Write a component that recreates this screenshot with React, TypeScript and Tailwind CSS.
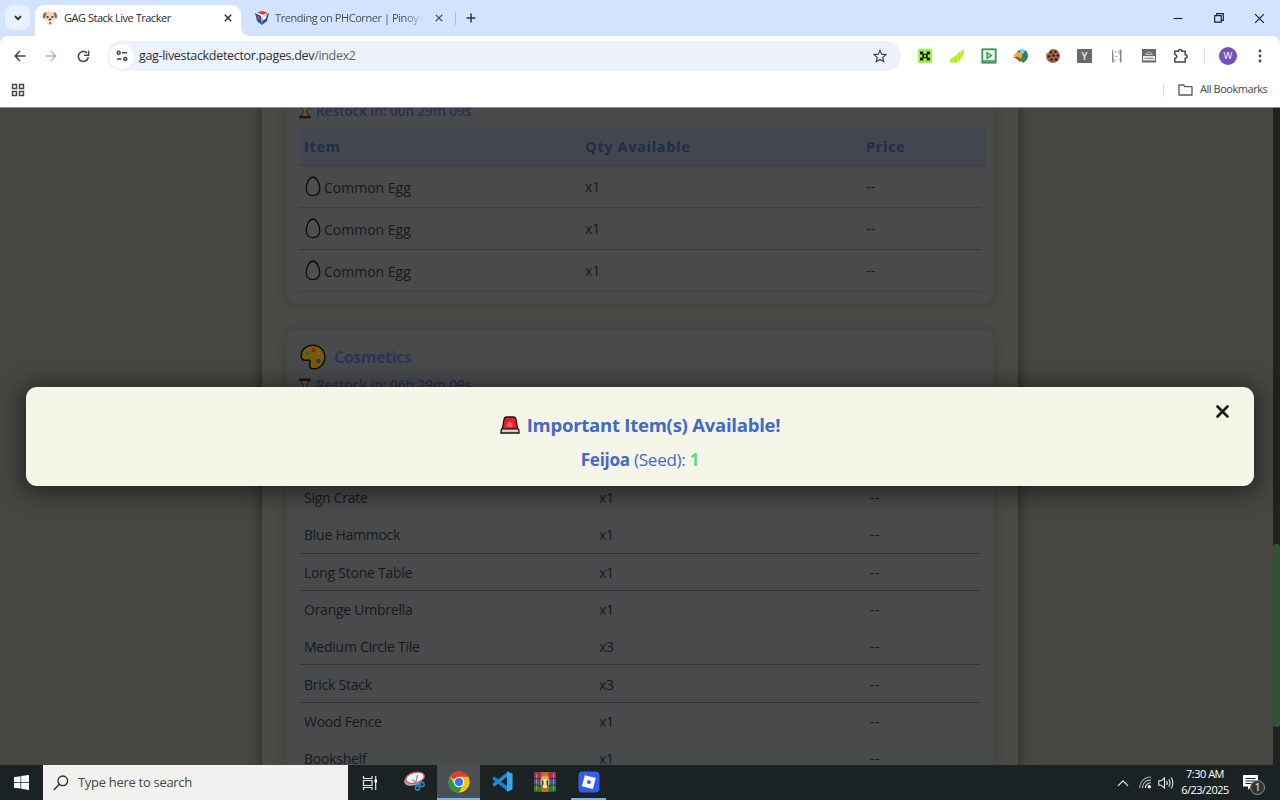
import clsx from "clsx";
import type { ReactNode } from "react";

type Item = { name: string; qty: string; line: string };

const eggs: Item[] = [
    { name: "Common Egg", qty: "x1", line: "border-[#3c3d3f]" },
    { name: "Common Egg", qty: "x1", line: "border-[#37383a]" },
    { name: "Common Egg", qty: "x1", line: "border-[#3f4042]" },
];

const cosmetics: Item[] = [
    { name: "Sign Crate", qty: "x1", line: "border-[#484a4c]" },
    { name: "Blue Hammock", qty: "x1", line: "border-[#343537]" },
    { name: "Long Stone Table", qty: "x1", line: "border-[#343537]" },
    { name: "Orange Umbrella", qty: "x1", line: "border-[#424446]" },
    { name: "Medium Circle Tile", qty: "x3", line: "border-[#343537]" },
    { name: "Brick Stack", qty: "x3", line: "border-[#343537]" },
    { name: "Wood Fence", qty: "x1", line: "border-[#424446]" },
    { name: "Bookshelf", qty: "x1", line: "border-[#424446]" },
];

/* ---------- small drawings ---------- */

function Cross({ size, width, color = "#1f2328" }: { size: number; width: number; color?: string }) {
    return (
        <svg width={size} height={size} viewBox="0 0 10 10" className="shrink-0">
            <path d="M1 1l8 8M9 1l-8 8" stroke={color} strokeWidth={width} fill="none" />
        </svg>
    );
}

function DogIcon() {
    return (
        <svg width="16" height="16" viewBox="0 0 16 16" className="shrink-0">
            <path d="M4 3C6 1 10 1 12 3l1 5-2 5c-1.500 2-4.500 2-6 0L3 8z" fill="#f0d3b0" />
            <path d="M4.500 2.300C2 1.500.8 4 1 7c.1 2 1.800 2 2.300.2zM11.500 2.300C14 1.500 15.200 4 15 7c-.1 2-1.800 2-2.300.2z" fill="#9c5f49" />
            <ellipse cx="8" cy="11" rx="3.200" ry="3" fill="#fff3e0" />
            <circle cx="5.700" cy="7" r="1" fill="#3b2b28" />
            <circle cx="10.300" cy="7" r="1" fill="#3b2b28" />
            <ellipse cx="8" cy="9.500" rx="1.500" ry="1" fill="#3b2b28" />
            <path d="M7 12h2v1.500c0 1.300-2 1.300-2 0z" fill="#ef5360" />
        </svg>
    );
}

function CornerIcon() {
    return (
        <svg width="14" height="14" viewBox="0 0 14 14" className="shrink-0">
            <path d="M0 2l7-2 7 2-2 8-5 4-5-4z" fill="#e9eefb" />
            <path d="M0 2l6 3 1 9-5-4z" fill="#1d4fb4" />
            <path d="M14 2L8 5.500 7 14l5-4z" fill="#24489f" />
            <path d="M2 1.500L7 0l6 1.700-5 2z" fill="#d5402f" />
            <path d="M8 5.500l4-2-1 4-3 2z" fill="#fff" />
            <path d="M1.500 4l3 1.500.5 4-2.500-1.500z" fill="#d5402f" />
        </svg>
    );
}

function Egg() {
    return (
        <svg width="16" height="21" viewBox="0 0 16 21" className="shrink-0">
            <path
                d="M8 1C4.500 1 1.200 7.500 1.200 12.500c0 4.500 2.800 7.200 6.800 7.200s6.800-2.700 6.800-7.200C14.800 7.500 11.500 1 8 1z"
                fill="#4d4e4f"
                stroke="#0c0d0e"
                strokeWidth="1.300"
            />
        </svg>
    );
}

function Hourglass() {
    return (
        <svg width="12" height="15" viewBox="0 0 12 15" className="shrink-0">
            <path d="M2 2h8c0 3-2.500 4-2.500 5.500S10 10 10 13H2c0-3 2.500-4 2.500-5.500S2 5 2 2z" fill="#55534a" stroke="#111" strokeWidth=".9" />
            <path d="M3.300 3.500h5.400L6 7zM3 12.500c0-2 2-2.500 3-3 1 .5 3 1 3 3z" fill="#6f5517" />
            <path d="M.8 1h10.400v1.600H.8zM.8 12.400h10.400V14H.8z" fill="#4a1512" stroke="#150808" strokeWidth=".7" />
        </svg>
    );
}

function Palette() {
    return (
        <svg width="26" height="26" viewBox="0 0 26 26" className="shrink-0">
            <path
                d="M13 1.200C6 1.200 1.200 6 1.200 12c0 2.500 1.500 4.200 4 4.200 2.500 0 4.600-.6 5 .8.4 1.300-.8 2.600-.6 4.600.3 2.400 2.200 3.200 4.200 3.200 6.300 0 11-5 11-11.800S19.500 1.200 13 1.200z"
                fill="#7a5a0c"
                stroke="#0e0e0e"
                strokeWidth="1.500"
            />
            <circle cx="7.500" cy="9.500" r="2" fill="#2f6a1d" />
            <circle cx="13.500" cy="6.500" r="2" fill="#86280f" />
            <circle cx="19" cy="10" r="1.600" fill="#846411" />
            <circle cx="18.500" cy="17" r="2.200" fill="#173f66" />
        </svg>
    );
}

function Siren() {
    return (
        <svg width="20" height="18" viewBox="0 0 20 18" className="shrink-0">
            <path d="M2.200 13.500L4 3.500C4.300 1.800 5.300 1 6.700 1h6.600c1.400 0 2.400.8 2.700 2.500l1.800 10z" fill="#e6212c" stroke="#1c1010" strokeWidth="1.300" />
            <path d="M10 5l.9 1.700 1.800-.4-.6 1.800 1.500 1.200-1.800.6.2 1.700-2-1-2 1 .2-1.700-1.800-.6 1.500-1.200-.6-1.800 1.800.4z" fill="#ff6a45" />
            <path d="M1.500 12.800h17l.7 4.200H.8z" fill="#d0cfd2" stroke="#1c1010" strokeWidth="1.300" strokeLinejoin="round" />
        </svg>
    );
}

/* ---------- browser ---------- */

function TabStrip() {
    return (
        <div className="h-9 flex bg-[#d3e3fd]">
            <div className="w-[35px] pl-[5px] pt-[5px]">
                <div className="w-[25px] h-[25px] rounded-lg bg-[#e9f1fe] flex items-center justify-center">
                    <svg width="8" height="6" viewBox="0 0 8 6">
                        <path d="M1 1.200l3 3 3-3" stroke="#1f2328" strokeWidth="1.700" fill="none" />
                    </svg>
                </div>
            </div>
            <div className="w-[206px] mt-[5px] h-[31px] bg-white rounded-t-[9px] flex items-center pl-[7px] pr-[9px] pb-[5px]">
                <DogIcon />
                <span className="ml-[6px] flex-1 whitespace-nowrap text-[11px] tracking-[-0.48px] text-[#26292d]">GAG Stack Live Tracker</span>
                <Cross size={8} width={1.700} />
            </div>
            <svg width="9" height="36" viewBox="0 0 9 36" className="shrink-0">
                <path d="M0 27c0 5 3 9 9 9H0z" fill="#fff" />
            </svg>
            <div className="h-9 flex items-center pl-[5px]">
                <CornerIcon />
                <span className="ml-[6px] w-[152px] whitespace-nowrap text-[11px] tracking-[-0.42px] bg-gradient-to-r from-[#40474f] from-85% to-[#d3e3fd] to-98% bg-clip-text text-transparent">
                    Trending on PHCorner | Pinoy In
                </span>
                <span className="ml-[8px] flex">
                    <Cross size={8} width={1.500} color="#3c434b" />
                </span>
                <div className="w-px h-[13px] bg-[#a9bfe3] ml-[12px]" />
                <svg width="10" height="10" viewBox="0 0 10 10" className="ml-[10px]">
                    <path d="M5 .5v9M.5 5h9" stroke="#30353b" strokeWidth="1.500" />
                </svg>
            </div>
            <div className="ml-auto h-9 flex items-center pr-[15px]">
                <svg width="10" height="10" viewBox="0 0 10 10">
                    <path d="M.5 5.500h9" stroke="#1f2328" strokeWidth="1.100" />
                </svg>
                <svg width="10" height="10" viewBox="0 0 10 10" className="ml-[31px]">
                    <path d="M.7 2.700h6.500v6.500H.7zM2.700 2.500V.7h6.600v6.600H7.400" fill="none" stroke="#1f2328" strokeWidth="1.200" />
                </svg>
                <span className="ml-[30px] flex">
                    <Cross size={11} width={1.100} />
                </span>
            </div>
        </div>
    );
}

function Extensions() {
    return (
        <div className="flex items-center gap-4">
            <svg width="16" height="16" viewBox="0 0 16 16">
                <rect x=".8" y=".8" width="14.400" height="14.400" rx="2.500" fill="#a3f04b" />
                <path d="M3 3.500h3.300v2.300h3.400V3.500H13v3h-2.300v3H13v3H9.700v-2.300H6.300v2.300H3v-3h2.300v-3H3z" fill="#152508" />
                <path d="M7 6.800h2v2.400H7z" fill="#7cd82c" />
            </svg>
            <svg width="16" height="16" viewBox="0 0 16 16">
                <path d="M1 14.500l1-4 2.500-1v5zM5 14.500V9L8 7v7.500zM8.500 14V5.500l3-2V12zM12 10V3.500L15 1l-1 7z" fill="#b4ee22" stroke="#b4ee22" strokeWidth=".4" />
            </svg>
            <svg width="16" height="16" viewBox="0 0 16 16">
                <rect x="1.300" y="1.300" width="13.400" height="13.400" fill="#f1faf2" stroke="#3d9551" strokeWidth="1.800" />
                <path d="M6 4.500l4.500 3L6 10.500z" fill="#b4dab8" stroke="#3d9551" strokeWidth="1.300" />
                <path d="M2 13h12" stroke="#3d9551" strokeWidth="1.500" />
            </svg>
            <svg width="16" height="16" viewBox="0 0 16 16">
                <circle cx="9" cy="7.500" r="6" fill="#2371b5" />
                <path d="M7 2.300c2-1 4-.5 5 .7L10 6 7 5z" fill="#8cc4ea" />
                <path d="M8 9c3-4 6.500-3 7-1-1 4-3 6.500-5.500 7z" fill="#2f8f3d" />
                <path d="M0 9c1-4 6-6.500 9.500-3L8 11C6 8.500 3 8 0 9z" fill="#e9b22d" />
                <path d="M.5 9.500C3 8 6.500 9 8.500 13L7 14C5 11.500 3 10.500.5 9.500z" fill="#b84a32" />
            </svg>
            <svg width="16" height="16" viewBox="0 0 16 16">
                <circle cx="8" cy="8" r="7" fill="#a5654b" />
                <path d="M1 1h4l-1 3-3 2z" fill="#fff" />
                <g fill="#35201c">
                    <circle cx="6" cy="4.500" r="1.300" />
                    <circle cx="10.500" cy="3.800" r="1.300" />
                    <circle cx="8.500" cy="7.500" r="1.300" />
                    <circle cx="12.800" cy="7.500" r="1.200" />
                    <circle cx="4" cy="8.500" r="1.300" />
                    <circle cx="6.500" cy="11.800" r="1.400" />
                    <circle cx="11" cy="11.500" r="1.400" />
                </g>
            </svg>
            <div className="w-4 h-4 flex items-center justify-center">
                <div className="w-[15px] h-[14px] bg-[#6a6a6a] text-[10px] leading-[14px] text-center text-[#eee] font-semibold">Y</div>
            </div>
            <svg width="16" height="16" viewBox="0 0 16 16">
                <path d="M3 1.500v13h1.500V8L3.800 1.500zM11 1.500h1.500v13H11z" fill="#858585" />
                <path d="M5.500 3h2v2h-2zM6 8h3v1H6zM5 11h1.500v3H5z" fill="#c4c4c4" />
                <path d="M8.500 2h2.500v4.500H9.300zM9 9l2 2v3z" fill="#cfcfcf" />
            </svg>
            <svg width="16" height="16" viewBox="0 0 16 16">
                <path d="M1 1h14v13.500H1z" fill="#676767" />
                <path d="M2 8h12v4.500H2z" fill="#e9e9e9" />
                <path d="M4.500 6.500c1-3 6-3 7 0z" fill="none" stroke="#c4c4c4" strokeWidth="1" />
                <path d="M3.500 10.300h9" stroke="#8a8a8a" strokeWidth="1" />
            </svg>
            <svg width="16" height="16" viewBox="0 0 16 16">
                <path
                    d="M1.800 3.200h3.500C5.300.8 8.800.8 8.800 3.200h3.400v3.600c2.600 0 2.600 3.400 0 3.400v3.700H1.800v-3.600c2.600-.3 2.600-3.400 0-3.700z"
                    fill="none"
                    stroke="#43474b"
                    strokeWidth="1.500"
                />
            </svg>
        </div>
    );
}

function Toolbar() {
    return (
        <div className="bg-[#d3e3fd]">
            <div className="h-10 flex items-center rounded-t-lg bg-white">
                <svg width="12" height="12" viewBox="0 0 12 12" className="ml-[14px]">
                    <path d="M11.500 6H1.500M6 1L1.200 6 6 11" fill="none" stroke="#42464a" strokeWidth="1.500" />
                </svg>
                <svg width="12" height="12" viewBox="0 0 12 12" className="ml-[19px]">
                    <path d="M.5 6h10M6 1l4.800 5L6 11" fill="none" stroke="#b4b6b9" strokeWidth="1.400" />
                </svg>
                <svg width="13" height="13" viewBox="0 0 13 13" className="ml-[20px]">
                    <path d="M11.300 7.200A5 5 0 1 1 10 3" fill="none" stroke="#42464a" strokeWidth="1.600" />
                    <path d="M11.600.8v4.500H7.200" fill="none" stroke="#42464a" strokeWidth="1.500" />
                </svg>
                <div className="ml-[17px] w-[794px] h-[30px] rounded-full bg-[#edf2fa] flex items-center pl-[2px] pr-[14px]">
                    <div className="w-[25px] h-[25px] rounded-full bg-white flex items-center justify-center">
                        <svg width="12" height="12" viewBox="0 0 12 12">
                            <g fill="none" stroke="#42464a" strokeWidth="1.500">
                                <circle cx="2.700" cy="2.800" r="1.500" />
                                <path d="M6 2.800h5M1 9h4.500" />
                                <circle cx="9.300" cy="9" r="1.500" />
                            </g>
                        </svg>
                    </div>
                    <span className="ml-[5px] pt-[1px] flex-1 whitespace-nowrap text-[12.500px] tracking-[-0.32px] text-[#2b2e33]">
                        gag-livestackdetector.pages.dev<span className="text-[#5d6268]">/index2</span>
                    </span>
                    <svg width="14" height="14" viewBox="0 0 14 14">
                        <path d="M7 1.300l1.700 3.900 4.200.4-3.200 2.800 1 4.200L7 10.400l-3.700 2.200 1-4.200L1.100 5.600l4.200-.4z" fill="none" stroke="#42464a" strokeWidth="1.200" />
                    </svg>
                </div>
                <div className="ml-[15.500px]">
                    <Extensions />
                </div>
                <div className="ml-[15px] w-px h-[14px] bg-[#cfdffb]" />
                <div className="ml-[14.500px] w-[18px] h-[18px] rounded-full bg-[#7751b8] text-[9.500px] leading-[18px] text-center text-white">W</div>
                <svg width="4" height="14" viewBox="0 0 4 14" className="ml-[21px]">
                    <g fill="#42464a">
                        <circle cx="2" cy="2" r="1.400" />
                        <circle cx="2" cy="7" r="1.400" />
                        <circle cx="2" cy="12" r="1.400" />
                    </g>
                </svg>
            </div>
        </div>
    );
}

function BookmarksBar() {
    return (
        <div className="h-8 flex items-center bg-white border-b border-[#8d8d8b] pl-[11px] pr-[13px] pb-[4px]">
            <svg width="14" height="14" viewBox="0 0 14 14">
                <path d="M1.500 1.500h4v4h-4zM8.500 1.500h4v4h-4zM1.500 8.500h4v4h-4zM8.500 8.500h4v4h-4z" fill="none" stroke="#43474b" strokeWidth="1.500" />
            </svg>
            <div className="ml-auto w-px h-[14px] bg-[#cfdffb]" />
            <svg width="15" height="12" viewBox="0 0 15 12" className="ml-[14px]">
                <path d="M1 1h4.500L7 2.700h7V11H1z" fill="none" stroke="#55595d" strokeWidth="1.300" strokeLinejoin="round" />
            </svg>
            <span className="ml-[7px] w-[67px] whitespace-nowrap text-[11px] tracking-[-0.46px] text-[#44484c]">All Bookmarks</span>
        </div>
    );
}

/* ---------- stock page ---------- */

function Card({ className, children }: { className?: string; children: ReactNode }) {
    return (
        <section className={clsx("mx-[25px] px-[12px] bg-[#494a4c] rounded-[10px] shadow-[0_0_8px_2px_rgba(58,58,56,0.5)]", className)}>
            {children}
        </section>
    );
}

function Restock({ time, className }: { time: string; className: string }) {
    return (
        <div className={clsx("flex items-center text-[13.500px] font-semibold text-[#283150]", className)}>
            <Hourglass />
            <span className="ml-[5px] whitespace-nowrap">Restock in: {time}</span>
        </div>
    );
}

function EggTable() {
    return (
        <div>
            <div className="h-[38px] -mr-[5px] grid grid-cols-[281px_281px_1fr] items-center pl-[5px] bg-[#43464e] border-b border-[#3a3d48] text-[14.500px] font-bold tracking-[0.68px] text-[#1f2c4c]">
                <span>Item</span>
                <span>Qty Available</span>
                <span>Price</span>
            </div>
            {eggs.map((egg, i) => (
                <div key={i} className={clsx("h-[42px] grid grid-cols-[281px_281px_1fr] items-center pl-[5px] border-b text-[14px] text-[#17191b]", egg.line)}>
                    <span className="flex items-center gap-[3px] pl-[1px]">
                        <Egg />
                        <span className="pt-[2px] whitespace-nowrap">{egg.name}</span>
                    </span>
                    <span>{egg.qty}</span>
                    <span className="tracking-[0.5px]">--</span>
                </div>
            ))}
        </div>
    );
}

function CosmeticsTable() {
    return (
        <div className="pt-[80px]">
            {cosmetics.map((item) => (
                <div
                    key={item.name}
                    className={clsx(
                        "h-[37.300px] grid grid-cols-[295px_271px_1fr] items-center pl-[5px] pt-[1px] border-b text-[14px] tracking-[-0.25px] text-[#17191b]",
                        item.line,
                    )}
                >
                    <span className="whitespace-nowrap">{item.name}</span>
                    <span>{item.qty}</span>
                    <span className="tracking-[0.7px]">--</span>
                </div>
            ))}
        </div>
    );
}

function Alert() {
    return (
        <div className="absolute left-[26px] top-[279px] w-[1228px] h-[99px] rounded-[11px] bg-[#f5f6e7] shadow-[0_3px_24px_4px_rgba(0,0,0,0.5)] flex flex-col items-center pt-[24px] text-[#4169c8]">
            <div className="h-[28px] flex items-center gap-[7px] text-[18.500px] font-bold">
                <Siren />
                <span className="whitespace-nowrap tracking-[-0.24px]">Important Item(s) Available!</span>
            </div>
            <div className="mt-[7px] h-[28px] leading-[28px] whitespace-nowrap text-[17px] tracking-[-0.25px]">
                <b>Feijoa</b> (Seed): <b className="text-[#55df7c]">1</b>
            </div>
            <button className="absolute right-[25px] top-[18px]">
                <svg width="13" height="13" viewBox="0 0 13 13">
                    <path d="M1.500 1.500l10 10M11.500 1.500l-10 10" stroke="#181a18" strokeWidth="2.600" strokeLinecap="round" />
                </svg>
            </button>
        </div>
    );
}

function StockPage() {
    return (
        <main className="relative h-[657px] flex overflow-hidden bg-[#464742]">
            <div className="ml-[262px] w-[756px] bg-[#4a4a46] shadow-[0_0_10px_1px_rgba(20,20,18,0.6)]">
                <Card className="-mt-[13px] pb-[12px]">
                    <Restock time="00h 29m 09s" className="h-[33px]" />
                    <EggTable />
                </Card>
                <Card className="mt-[26px] pt-[12px]">
                    <div className="h-[30px] flex items-center pl-[1px]">
                        <Palette />
                        <h2 className="ml-[8px] text-[16px] font-bold tracking-[-0.42px] text-[#2a3559]">Cosmetics</h2>
                    </div>
                    <Restock time="06h 29m 09s" className="h-[27px]" />
                    <CosmeticsTable />
                </Card>
            </div>
            <div className="ml-auto w-[7px] bg-[#21221f] pt-[436px]">
                <div className="h-[183px] rounded-[3px] bg-[#325232]" />
            </div>
            <Alert />
        </main>
    );
}

/* ---------- taskbar ---------- */

function TaskButton({ active, open, children }: { active?: boolean; open?: boolean; children: ReactNode }) {
    return (
        <div className={clsx("w-[43.400px] h-full flex flex-col items-center", active && "bg-[#4a4f51]")}>
            <div className="flex-1 flex items-center">{children}</div>
            <div className={clsx("h-[2px]", active ? "w-full bg-[#76b5e8]" : "w-[35px]", open && "bg-[#76b5e8]")} />
        </div>
    );
}

function Taskbar() {
    return (
        <footer className="h-[35px] flex items-center bg-[#1b2223]">
            <div className="w-[43px] flex justify-center">
                <svg width="15" height="15" viewBox="0 0 15 15">
                    <path d="M0 2.200L6.500 1.200V7H0zM7.200 1.100L15 0v7H7.200zM0 7.700h6.500v5.900L0 12.700zM7.200 7.700H15V15l-7.800-1.200z" fill="#fff" />
                </svg>
            </div>
            <div className="w-[305px] h-full bg-[#f1f1f0] flex items-center pl-[10px]">
                <svg width="16" height="16" viewBox="0 0 16 16">
                    <circle cx="9.800" cy="5.800" r="4.800" fill="none" stroke="#2b2b2b" strokeWidth="1.300" />
                    <path d="M6.300 9.300L.8 15" stroke="#2b2b2b" strokeWidth="1.400" />
                </svg>
                <span className="ml-[9px] pt-[1px] whitespace-nowrap text-[13px] tracking-[-0.3px] text-[#454545]">Type here to search</span>
            </div>
            <div className="w-[45.600px] flex justify-center pr-[2px]">
                <svg width="16" height="14" viewBox="0 0 16 14">
                    <g fill="none" stroke="#e6e8e8" strokeWidth="1.200">
                        <path d="M1.500 0v2.500h8.500V0M1.500 4.500h8.500v5H1.500zM1.500 14v-2.500h8.500V14M13.700 0v14" />
                    </g>
                    <rect x="12.500" y="3.500" width="2.500" height="3" fill="#fff" />
                </svg>
            </div>
            <TaskButton>
                <svg width="22" height="21" viewBox="0 0 22 21">
                    <ellipse cx="9.500" cy="9" rx="9.500" ry="5.500" fill="#a9adb0" transform="rotate(-14 9.500 9)" />
                    <ellipse cx="11" cy="6.800" rx="9.500" ry="5.300" fill="#f5f3f3" stroke="#d2525b" strokeWidth="1.200" transform="rotate(-14 11 6.800)" />
                    <path d="M13.500 4l-2 9M8 8.500l8 5.500" stroke="#8d9599" strokeWidth="1.300" />
                    <circle cx="13.500" cy="17" r="2.100" fill="none" stroke="#2784c8" strokeWidth="1.600" />
                    <circle cx="18" cy="13.500" r="2.100" fill="none" stroke="#2784c8" strokeWidth="1.600" />
                </svg>
            </TaskButton>
            <TaskButton active>
                <svg width="22" height="22" viewBox="0 0 22 22">
                    <circle cx="11" cy="11" r="10.500" fill="#fbc116" />
                    <path d="M11 11L1.900 5.750A10.500 10.500 0 0 1 20.100 5.750z" fill="#e33b2e" />
                    <path d="M1.900 5.750A10.500 10.500 0 0 0 11 21.500l4.500-8L11 11 6.500 13.600z" fill="#279847" />
                    <path d="M11 5.800h9.100a10.500 10.500 0 0 1-9.100 15.700l4.500-8z" fill="#fbc116" />
                    <circle cx="11" cy="11" r="5.200" fill="#fff" />
                    <circle cx="11" cy="11" r="4.100" fill="#3479e0" />
                </svg>
            </TaskButton>
            <TaskButton>
                <svg width="21" height="21" viewBox="0 0 24 24">
                    <path d="M.8 8.200l2-1.800 15 11.300V23L.8 9.800z" fill="#1681c7" />
                    <path d="M.8 15.800l2 1.800L17.800 6.300V1L.8 14.200z" fill="#1f8bd0" />
                    <path d="M17.200.3L23.500 3v18l-6.300 2.700z" fill="#35a7ee" />
                </svg>
            </TaskButton>
            <TaskButton>
                <svg width="22" height="20" viewBox="0 0 22 20">
                    <rect width="22" height="6.500" rx="1" fill="#a53357" />
                    <rect y="6.800" width="22" height="6.200" fill="#4056a3" />
                    <rect y="13.300" width="22" height="6.500" rx="1" fill="#2f7b35" />
                    <path d="M2.500 2v16M19.500 2v16" stroke="#c39a55" strokeWidth=".8" />
                    <path d="M0 6.600h22M0 13.100h22" stroke="#30283a" strokeWidth=".8" />
                    <rect x="7.500" y="0" width="7" height="20" fill="#bd6c27" />
                    <path d="M6.500 8c0-6 9-6 9 0v5h-9z" fill="#e5a63b" />
                    <path d="M9 7h4v9H9z" fill="#f7e4ba" />
                    <path d="M8 8.500h1.500V13H8zM12.500 8.500H14V13h-1.500z" fill="#573820" />
                </svg>
            </TaskButton>
            <TaskButton open>
                <svg width="22" height="22" viewBox="0 0 22 22">
                    <rect x=".5" y=".5" width="21" height="21" rx="4" fill="#345df0" />
                    <path d="M6.800 4.200l11 2.900-2.900 11-11-2.900z" fill="#fff" />
                    <path d="M9.700 9l3.300.9-.9 3.300-3.300-.9z" fill="#345df0" />
                </svg>
            </TaskButton>
            <div className="ml-auto flex items-center pr-[15px]">
                <svg width="12" height="8" viewBox="0 0 12 8">
                    <path d="M1 6.800l5-5 5 5" fill="none" stroke="#e8eaea" strokeWidth="1.200" />
                </svg>
                <svg width="13" height="13" viewBox="0 0 13 13" className="ml-[10px]">
                    <g fill="none" stroke="#dadddd" strokeWidth="1.100">
                        <path d="M.8 12C.8 5.500 5.500 1 12 1" opacity=".7" />
                        <path d="M3.600 12c0-5 3.500-8 8.400-8M6.400 12c0-3 2.300-5.200 5.600-5.200" />
                    </g>
                    <circle cx="10.300" cy="10.700" r="1.700" fill="#fff" />
                </svg>
                <svg width="16" height="14" viewBox="0 0 16 14" className="ml-[6px]">
                    <g fill="none" stroke="#e8eaea" strokeWidth="1.100">
                        <path d="M.8 4.800h2.500L6.500 2v10L3.300 9.200H.8zM8.500 5c.8 1 .8 3 0 4M10.700 3.300c1.700 2 1.700 5.400 0 7.400M13 1.500c2.500 3 2.500 8 0 11" />
                    </g>
                </svg>
                <div className="ml-[6px] w-[50px] pb-[2px] flex flex-col items-center whitespace-nowrap text-[11px] leading-[16px] tracking-[-0.5px] text-white">
                    <span>7:30 AM</span>
                    <span>6/23/2025</span>
                </div>
                <div className="relative ml-[13px] w-[22px] h-[24px] pt-[4px]">
                    <svg width="15" height="15" viewBox="0 0 15 15">
                        <path d="M0 0h15v11.500H8L5 15v-3.500H0z" fill="#fff" />
                        <path d="M2.500 3.500h10M2.500 6h10M2.500 8.500h6" stroke="#1b2223" strokeWidth="1" />
                    </svg>
                    <div className="absolute left-[7px] top-[9px] w-[15px] h-[15px] rounded-full bg-[#303637] border border-[#8d9192] text-[10px] leading-[13px] text-center text-white">
                        1
                    </div>
                </div>
            </div>
        </footer>
    );
}

function App() {
    return (
        <div className="w-[1280px] h-[800px] flex flex-col overflow-hidden font-['Open_Sans','Noto_Sans',sans-serif]">
            <TabStrip />
            <Toolbar />
            <BookmarksBar />
            <StockPage />
            <Taskbar />
        </div>
    );
}

export default App;
